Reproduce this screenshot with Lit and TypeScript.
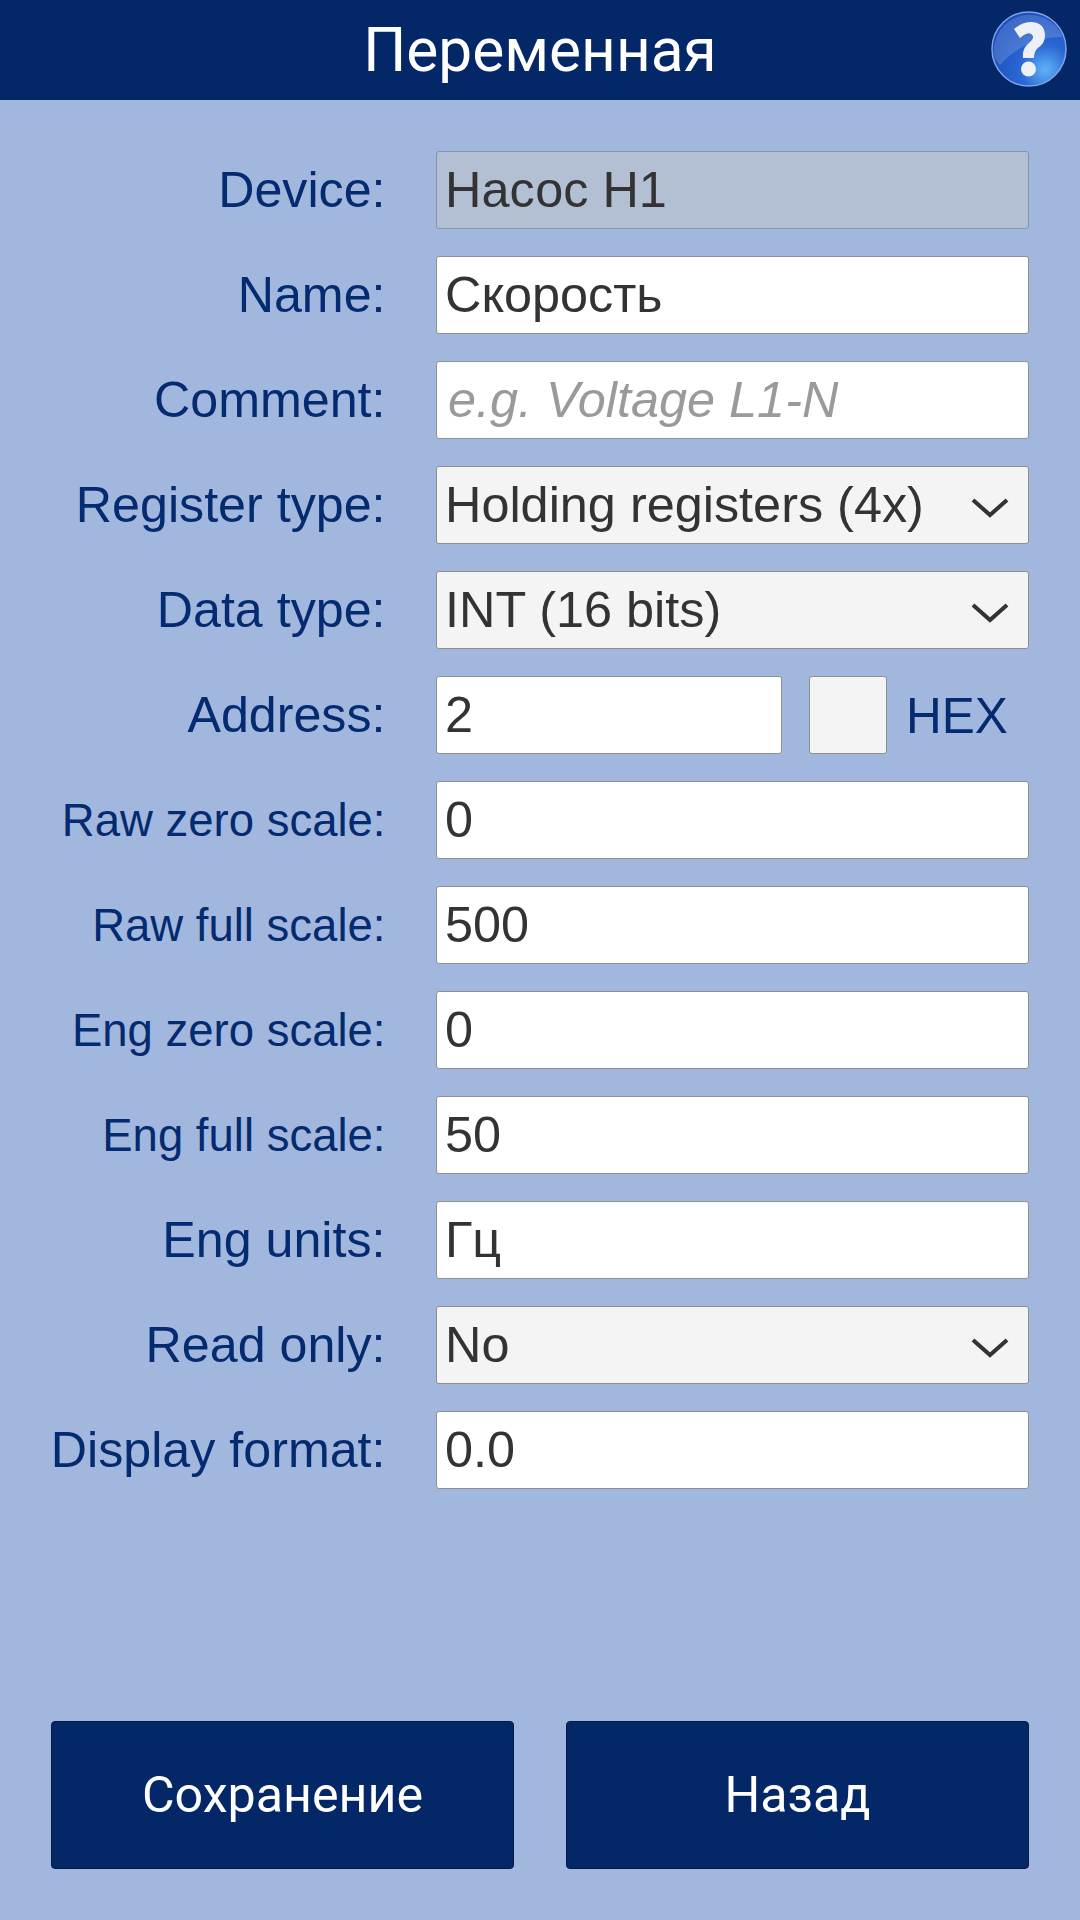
import {html, css, LitElement} from 'lit';
import {customElement} from 'lit/decorators.js';

type FieldKind = 'text' | 'disabled' | 'select' | 'address';

interface Field {
  label: string;
  value: string;
  kind: FieldKind;
  small?: boolean;
  placeholder?: boolean;
}

const FIELDS: Field[] = [
  {label: 'Device:', value: 'Насос Н1', kind: 'disabled'},
  {label: 'Name:', value: 'Скорость', kind: 'text'},
  {label: 'Comment:', value: 'e.g. Voltage L1-N', kind: 'text', placeholder: true},
  {label: 'Register type:', value: 'Holding registers (4x)', kind: 'select'},
  {label: 'Data type:', value: 'INT (16 bits)', kind: 'select'},
  {label: 'Address:', value: '2', kind: 'address'},
  {label: 'Raw zero scale:', value: '0', kind: 'text', small: true},
  {label: 'Raw full scale:', value: '500', kind: 'text', small: true},
  {label: 'Eng zero scale:', value: '0', kind: 'text', small: true},
  {label: 'Eng full scale:', value: '50', kind: 'text', small: true},
  {label: 'Eng units:', value: 'Гц', kind: 'text'},
  {label: 'Read only:', value: 'No', kind: 'select'},
  {label: 'Display format:', value: '0.0', kind: 'text'},
];

@customElement('app-root')
export class AppRoot extends LitElement {
  static styles = css`
    :host {
      display: flex;
      flex-direction: column;
      width: 1080px;
      height: 1920px;
      background: #a2b7de;
      font-family: 'Liberation Sans', Arial, sans-serif;
      color: #042a70;
    }

    .header {
      position: relative;
      display: flex;
      align-items: center;
      justify-content: center;
      height: 100px;
      background: #042768;
      color: #fff;
      font-family: Roboto, sans-serif;
      font-size: 60.4px;
    }

    .help {
      position: absolute;
      top: 11px;
      right: 13px;
      width: 76px;
      height: 76px;
    }

    .form {
      display: flex;
      flex-direction: column;
      gap: 27px;
      padding: 51px 51px 0 0;
    }

    .row {
      display: grid;
      grid-template-columns: 385.5px 1fr;
      column-gap: 50.5px;
      align-items: center;
      height: 78px;
    }

    .label {
      text-align: right;
      font-size: 50.2px;
      line-height: 56px;
      white-space: nowrap;
    }

    .label.small {
      padding-top: 2px;
      font-size: 45.5px;
      line-height: normal;
    }

    .field {
      position: relative;
      box-sizing: border-box;
      display: flex;
      align-items: center;
      height: 78px;
      padding: 0 8px 2px;
      border: 1px solid #8f8f8f;
      border-radius: 3px;
      background: #fff;
      color: #333;
      font-size: 50.4px;
      white-space: nowrap;
    }

    .field.disabled {
      background: #b3bfd3;
      border-color: #8594ad;
    }

    .field.select,
    .check {
      background: #f4f4f4;
    }

    .field.placeholder {
      padding-left: 11px;
      color: #9a9a9a;
      font-style: italic;
    }

    .chevron {
      position: absolute;
      right: 18px;
      top: 28px;
      width: 40px;
      height: 24px;
    }

    .address {
      display: flex;
      align-items: center;
    }

    .address .field {
      width: 346px;
    }

    .check {
      box-sizing: border-box;
      width: 78px;
      height: 78px;
      margin-left: 27px;
      border: 1px solid #8f8f8f;
      border-radius: 3px;
    }

    .hex {
      margin-left: 19px;
      font-size: 49.5px;
    }

    .actions {
      display: flex;
      gap: 52px;
      margin-top: auto;
      padding: 0 51px 51px;
    }

    .button {
      box-sizing: border-box;
      flex: 1;
      display: flex;
      align-items: center;
      justify-content: center;
      height: 148px;
      padding-bottom: 2px;
      border: 1px solid #021a4a;
      border-radius: 4px;
      background: #042768;
      color: #fff;
      font-family: Roboto, sans-serif;
      font-size: 50.2px;
    }
  `;

  private renderHelp() {
    return html`
      <svg class="help" viewBox="0 0 76 76">
        <defs>
          <radialGradient id="ball" cx="0.72" cy="0.78" r="0.75">
            <stop offset="0" stop-color="#5fb2f8"></stop>
            <stop offset="0.45" stop-color="#2a68d2"></stop>
            <stop offset="1" stop-color="#1c4fc0"></stop>
          </radialGradient>
        </defs>
        <circle cx="38" cy="38" r="37" fill="url(#ball)" stroke="#7fa3e6" stroke-width="1.5"></circle>
        <path d="M3 44 A36 36 0 0 1 72 26 Q34 26 9 54 Q4 49 3 44Z" fill="#fff" opacity="0.16"></path>
        <path
          d="M23 18 Q31 11 41 11 Q54 12 54 25 Q54 32 47 37 Q43 40 43 47 H32 Q31 37 38 32 Q43 28 42 25 Q40 21 35 23 Q32 24 29 27Z"
          fill="#eef0f7"
        ></path>
        <circle cx="37.5" cy="58" r="7.5" fill="#eef0f7"></circle>
      </svg>
    `;
  }

  private renderChevron() {
    return html`
      <svg class="chevron" viewBox="0 0 40 24">
        <path d="M3 5 L20 20 L37 5" fill="none" stroke="#333" stroke-width="4"></path>
      </svg>
    `;
  }

  private renderControl(f: Field) {
    if (f.kind === 'address') {
      return html`
        <div class="address">
          <div class="field">${f.value}</div>
          <div class="check"></div>
          <div class="hex">HEX</div>
        </div>
      `;
    }
    const classes = ['field', f.kind, f.placeholder ? 'placeholder' : ''].join(' ');
    return html`
      <div class=${classes}>
        ${f.value} ${f.kind === 'select' ? this.renderChevron() : ''}
      </div>
    `;
  }

  render() {
    return html`
      <div class="header">
        Переменная
        ${this.renderHelp()}
      </div>
      <div class="form">
        ${FIELDS.map(
          (f) => html`
            <div class="row">
              <div class="label ${f.small ? 'small' : ''}">${f.label}</div>
              ${this.renderControl(f)}
            </div>
          `
        )}
      </div>
      <div class="actions">
        <div class="button">Сохранение</div>
        <div class="button">Назад</div>
      </div>
    `;
  }
}
